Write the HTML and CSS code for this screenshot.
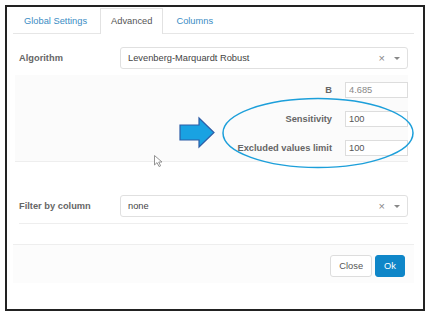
FILE: index.html
```html
<!doctype html>
<html lang="en">
<head>
    <meta charset="UTF-8">
    <meta name="viewport" content="width=device-width, initial-scale=1.0">
    <title>Settings</title>
    <link rel="stylesheet" href="styles.css">
</head>
<body>
    <div class="frame">
        <div class="modal">
            <ul class="tabs">
                <li class="tab">Global Settings</li>
                <li class="tab active">Advanced</li>
                <li class="tab">Columns</li>
            </ul>
            <div class="modal-body">
                <div class="row">
                    <label class="row-label">Algorithm</label>
                    <div class="select">
                        <span class="select-text">Levenberg-Marquardt Robust</span>
                        <span class="select-clear">&times;</span>
                        <span class="select-caret"></span>
                    </div>
                </div>
                <div class="params">
                    <div class="param">
                        <label class="param-label">B</label>
                        <input class="param-input muted" type="text" value="4.685">
                    </div>
                    <div class="param">
                        <label class="param-label">Sensitivity</label>
                        <input class="param-input" type="text" value="100">
                    </div>
                    <div class="param">
                        <label class="param-label">Excluded values limit</label>
                        <input class="param-input" type="text" value="100">
                    </div>
                </div>
                <div class="row filter-row">
                    <label class="row-label">Filter by column</label>
                    <div class="select">
                        <span class="select-text">none</span>
                        <span class="select-clear">&times;</span>
                        <span class="select-caret"></span>
                    </div>
                </div>
            </div>
            <div class="modal-footer">
                <button class="btn" type="button">Close</button>
                <button class="btn btn-primary" type="button">Ok</button>
            </div>
        </div>
    </div>

    <svg class="overlay" width="434" height="318" viewBox="0 0 434 318">
        <!-- highlight -->
        <path d="M180 125 L199 125 L199 118 L214 132.5 L199 147 L199 140 L180 140 Z" fill="#19a2e2" stroke="#2d5da6" stroke-width="1.2"/>
        <ellipse cx="318" cy="133" rx="95" ry="34.5" fill="none" stroke="#1c9fda" stroke-width="1.5"/>
        <!-- mouse pointer -->
        <path d="M154.5 155.5 L154.5 165 L157 162.6 L159 166.5 L160.6 165.8 L158.7 162 L162 162 Z" fill="#fff" stroke="#888" stroke-width="0.9"/>
    </svg>
</body>
</html>
```

FILE: styles.css
```css
body {
    margin: 0;
    position: relative;
    width: 434px;
    height: 318px;
    background: #fff;
    font-family: "Liberation Sans", Arial, sans-serif;
    font-size: 9.3px;
    color: #555;
}
.frame {
    margin: 5px 0 0 5px;
    width: 420px;
    height: 306px;
    border: 2px solid #222;
    box-sizing: border-box;
    background: #fff;
}
.modal {
    width: 401px;
    margin-left: 6px;
}
.tabs {
    display: flex;
    list-style: none;
    margin: 1px 0 0;
    padding: 0;
    border-bottom: 1px solid #e6e6e6;
}
.tab {
    padding: 0 10px;
    margin-right: 2px;
    line-height: 24px;
    border: 1px solid transparent;
    border-bottom: none;
    color: #3a8cc4;
}
.tab.active {
    color: #555;
    background: #fff;
    border-color: #e2e2e2;
    margin-bottom: -1px;
    padding-bottom: 1px;
}
.modal-body {
    padding: 13px 6px 0;
}
.row {
    display: flex;
    align-items: center;
}
.row-label {
    width: 101px;
    font-weight: bold;
    color: #666;
}
.select {
    flex: 1;
    display: flex;
    align-items: center;
    height: 22px;
    border: 1px solid #e0e0e0;
    border-radius: 3px;
    box-sizing: border-box;
    padding: 0 7px;
    background: #fff;
}
.select-text {
    flex: 1;
    color: #444;
}
.select-clear {
    color: #888;
    font-size: 11px;
    margin-right: 9px;
}
.select-caret {
    width: 0;
    height: 0;
    border-left: 3px solid transparent;
    border-right: 3px solid transparent;
    border-top: 3px solid #888;
}
.params {
    margin: 6px 0 0 -4px;
    padding: 7px 0 5px 4px;
    background: #fbfbfb;
    border-bottom: 1px solid #eee;
    display: flex;
    flex-direction: column;
    gap: 13px;
}
.param {
    display: flex;
    align-items: center;
    justify-content: flex-end;
}
.param-label {
    font-weight: bold;
    color: #666;
    margin-right: 13px;
}
.param-input {
    width: 63px;
    height: 16px;
    box-sizing: border-box;
    border: 1px solid #ddd;
    padding: 0 3px;
    font-family: inherit;
    font-size: 9.3px;
    color: #555;
    outline: none;
}
.param-input.muted {
    color: #888;
}
.filter-row {
    margin-top: 33px;
    padding-bottom: 6px;
    border-bottom: 1px solid #eee;
}
.modal-footer {
    margin-top: 20px;
    border-top: 1px solid #eee;
    background: #fcfcfc;
    padding: 10px 9px 6px;
    display: flex;
    justify-content: flex-end;
    gap: 3px;
}
.btn {
    height: 22px;
    padding: 0 8px;
    border: 1px solid #ddd;
    border-radius: 3px;
    background: #fff;
    color: #555;
    font-family: inherit;
    font-size: 9.3px;
}
.btn-primary {
    background: #0f86c8;
    border-color: #0f86c8;
    color: #fff;
}
.overlay {
    position: absolute;
    top: 0;
    left: 0;
    pointer-events: none;
}
```
